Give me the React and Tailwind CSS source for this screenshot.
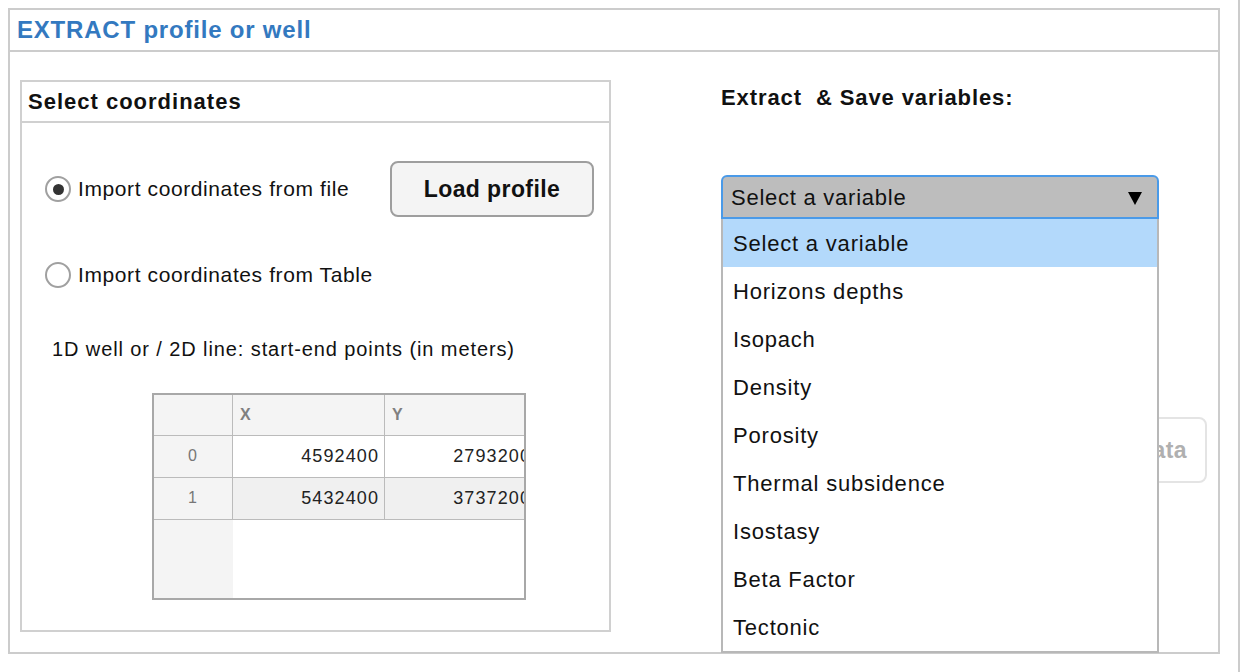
import React from "react";

const items = [
  "Select a variable",
  "Horizons depths",
  "Isopach",
  "Density",
  "Porosity",
  "Thermal subsidence",
  "Isostasy",
  "Beta Factor",
  "Tectonic",
];

function Radio({ checked }) {
  return (
    <span className="flex h-[26px] w-[26px] shrink-0 items-center justify-center rounded-full border-2 border-[#a0a0a0] bg-white">
      {checked && <span className="h-[11px] w-[11px] rounded-full bg-[#333]" />}
    </span>
  );
}

export default function App() {
  return (
    <div
      className="h-[672px] w-[1240px] overflow-hidden border-r-2 border-[#cccccc] bg-white pl-[8px] pt-[8px] text-[#111]"
      style={{ fontFamily: '"Liberation Sans", Arial, sans-serif' }}
    >
      <div className="flex h-[646px] w-[1212px] flex-col border-2 border-[#cccccc]">
        {/* header */}
        <div className="flex h-[42px] shrink-0 items-center border-b-2 border-[#cccccc] pl-[7px]">
          <span className="text-[24px] font-bold tracking-[0.8px] text-[#3379c0]">EXTRACT profile or well</span>
        </div>

        {/* body */}
        <div className="flex flex-1 pl-[10px] pt-[28px]">
          {/* left box */}
          <div className="flex h-[552px] w-[591px] shrink-0 flex-col border-2 border-[#d0d0d0]">
            <div className="flex h-[41px] shrink-0 items-center border-b-2 border-[#d0d0d0] pl-[6px]">
              <span className="text-[22px] font-bold tracking-[1px]">Select coordinates</span>
            </div>

            <div className="mt-[38px] flex h-[56px] items-center">
              <div className="flex w-[368px] items-center gap-[7px] pl-[23px]">
                <Radio checked />
                <span className="text-[21px] tracking-[0.6px]">Import coordinates from file</span>
              </div>
              <button className="flex h-[56px] w-[204px] items-center justify-center rounded-[8px] border-2 border-[#9e9e9e] bg-[#f4f4f4] text-[23px] font-bold tracking-[0.4px]">
                Load profile
              </button>
            </div>

            <div className="mt-[42px] flex items-center gap-[7px] pl-[23px]">
              <Radio />
              <span className="text-[21px] tracking-[0.6px]">Import coordinates from Table</span>
            </div>

            <div className="mt-[46px] pl-[30px] text-[20px] leading-[24px] tracking-[0.9px]">
              1D well or / 2D line: start-end points (in meters)
            </div>

            {/* table */}
            <div className="ml-[130px] mt-[32px] flex h-[207px] w-[374px] overflow-hidden border-2 border-[#a8a8a8] bg-white text-[18px] tracking-[1.1px]">
              <div className="flex w-[79px] shrink-0 flex-col bg-[#f4f4f4]">
                <div className="h-[41px] shrink-0 border-b border-r border-[#bbbbbb]" />
                <div className="flex h-[42px] shrink-0 items-center justify-center border-b border-r border-[#bbbbbb] text-[16px] text-[#777]">0</div>
                <div className="flex h-[42px] shrink-0 items-center justify-center border-b border-r border-[#bbbbbb] text-[16px] text-[#777]">1</div>
              </div>
              <div className="flex w-[152px] shrink-0 flex-col">
                <div className="flex h-[41px] shrink-0 items-center border-b border-r border-[#bbbbbb] bg-[#f4f4f4] pl-[7px] text-[16px] font-bold text-[#808080]">X</div>
                <div className="flex h-[42px] shrink-0 items-center justify-end border-b border-r border-[#bbbbbb] pr-[5px] text-[#222]">4592400</div>
                <div className="flex h-[42px] shrink-0 items-center justify-end border-b border-r border-[#bbbbbb] bg-[#f0f0f0] pr-[5px] text-[#222]">5432400</div>
              </div>
              <div className="flex w-[152px] shrink-0 flex-col">
                <div className="flex h-[41px] shrink-0 items-center border-b border-r border-[#bbbbbb] bg-[#f4f4f4] pl-[7px] text-[16px] font-bold text-[#808080]">Y</div>
                <div className="flex h-[42px] shrink-0 items-center justify-end border-b border-r border-[#bbbbbb] pr-[5px] text-[#222]">2793200</div>
                <div className="flex h-[42px] shrink-0 items-center justify-end border-b border-r border-[#bbbbbb] bg-[#f0f0f0] pr-[5px] text-[#222]">3737200</div>
              </div>
            </div>
          </div>

          {/* right column */}
          <div className="ml-[110px] flex w-[497px] flex-col">
            <div className="mt-[5px] whitespace-pre text-[22px] font-bold leading-[26px] tracking-[0.9px]">Extract  &amp; Save variables:</div>

            <div className="relative mt-[64px] w-[438px]">
              <div className="flex h-[44px] items-center justify-between rounded-t-[6px] border-2 border-[#4a9ae8] bg-[#bdbdbd] pl-[8px] pr-[15px]">
                <span className="text-[22px] tracking-[0.75px]">Select a variable</span>
                <svg width="14" height="14" viewBox="0 0 14 14" className="mt-[1px]">
                  <polygon points="0,1 14,1 7,14" fill="#000" />
                </svg>
              </div>
              <div className="absolute left-0 top-full z-10 w-[438px] border-2 border-t-0 border-[#b8b8b8] bg-white">
                {items.map((it, i) => (
                  <div
                    key={it}
                    className={
                      i === 0
                        ? "flex h-[48px] items-center bg-[#b3d9fb] pl-[10px] text-[22px] tracking-[0.8px]"
                        : "flex h-[48px] items-center bg-white pl-[10px] text-[22px] tracking-[0.8px]"
                    }
                  >
                    {it}
                  </div>
                ))}
              </div>
            </div>

            <div className="mr-[11px] mt-[198px] flex justify-end">
              <button className="flex h-[66px] items-center rounded-[8px] border-2 border-[#e4e4e4] bg-white px-[18px] text-[23px] font-bold tracking-[0.4px] text-[#b0b0b0]">
                Save data
              </button>
            </div>
          </div>
        </div>
      </div>
    </div>
  );
}
